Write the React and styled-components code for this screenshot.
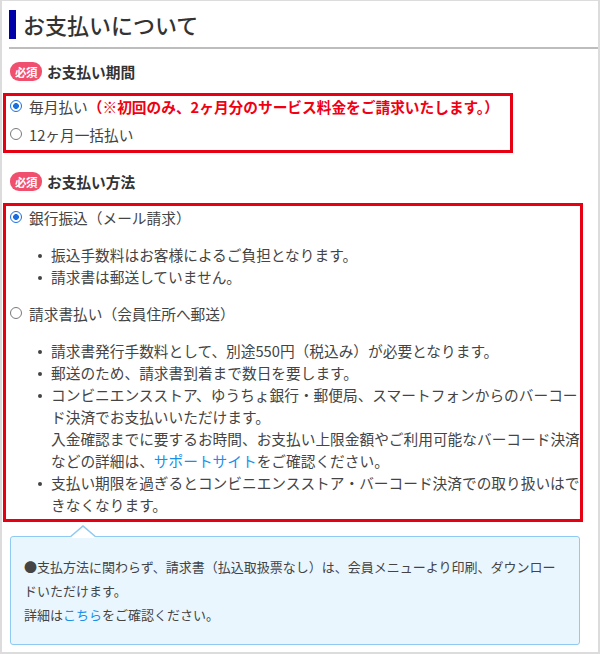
import React from "react";
import styled, { createGlobalStyle } from "styled-components";

const Global = createGlobalStyle`
  html, body { margin: 0; padding: 0; background: #fff; }
  body { font-family: "Noto Sans CJK JP", "Noto Sans", sans-serif; color: #444; }
  * { box-sizing: border-box; }
`;

const Frame = styled.div`
  width: 600px;
  height: 654px;
  border-style: solid;
  border-color: #dcdcdc;
  border-width: 1px 2px 2px 2px;
  display: flex;
  flex-direction: column;
  align-items: flex-start;
  overflow: hidden;
`;

const Heading = styled.h1`
  margin: 9px 0 0 7px;
  align-self: stretch;
  padding: 0 0 8px 0;
  border-bottom: 2px solid #bdbdbd;
  display: flex;
  align-items: center;
  gap: 7px;
  font-size: 22px;
  font-weight: 500;
  line-height: 29px;
  color: #333;
`;

const Bar = styled.span`
  width: 7px;
  height: 29px;
  background: #0000a8;
`;

const SectionLabel = styled.div`
  margin: ${(p) => p.$mt}px 0 0 8px;
  display: flex;
  align-items: center;
  gap: 5px;
  height: 19px;
  font-size: 14.7px;
  font-weight: 700;
  color: #333;
`;

const Badge = styled.span`
  width: 32px;
  height: 19px;
  border-radius: 9px;
  background: #f0506e;
  color: #fff;
  font-size: 11.5px;
  font-weight: 700;
  display: flex;
  align-items: center;
  justify-content: center;
  letter-spacing: -0.5px;
`;

const RedBox = styled.div`
  margin: 12px 0 0 1px;
  width: ${(p) => p.$w}px;
  border: 3px solid #e60012;
  padding: ${(p) => p.$pad};
  display: flex;
  flex-direction: column;
  gap: ${(p) => p.$gap}px;
`;

const Radio = styled.label`
  display: flex;
  align-items: center;
  gap: 7px;
  height: ${(p) => p.$h}px;
  font-size: 14.7px;
  color: #444;
  white-space: nowrap;
`;

const RadioMark = styled.span`
  width: 12px;
  height: 12px;
  border-radius: 50%;
  flex: none;
  border: 1.5px solid ${(p) => (p.$on ? "#1a6fe0" : "#7a7a7a")};
  background: ${(p) =>
    p.$on ? "radial-gradient(circle, #1a6fe0 0 2.6px, #fff 3.2px)" : "#fff"};
`;

const Note = styled.span`
  color: #f00012;
  font-weight: 700;
`;

const Group = styled.div`
  display: flex;
  flex-direction: column;
`;

const List = styled.ul`
  list-style: none;
  margin: 16px 0 0 0;
  padding: 0 0 0 28px;
  width: 572px;
  font-size: 14.7px;
  line-height: 22px;
  color: #444;
`;

const Item = styled.li`
  display: grid;
  grid-template-columns: 13px 1fr;
  &::before {
    content: "";
    width: 4px;
    height: 4px;
    border-radius: 50%;
    background: #444;
    margin-top: 10px;
  }
`;

const Link = styled.a`
  color: #1a8fe8;
  text-decoration: none;
`;

const InfoBox = styled.div`
  position: relative;
  margin: 14px 0 0 8px;
  width: 570px;
  border: 1px solid #8fcaf2;
  border-radius: 3px;
  background: #eaf6fe;
  padding: 18px 18px 17px 13px;
  font-size: 13px;
  line-height: 24px;
  color: #444;
  &::before,
  &::after {
    content: "";
    position: absolute;
    left: 58px;
    width: 0;
    height: 0;
    border-left: 14px solid transparent;
    border-right: 14px solid transparent;
  }
  &::before {
    top: -12px;
    border-bottom: 12px solid #8fcaf2;
  }
  &::after {
    top: -10.5px;
    left: 59px;
    border-left-width: 13px;
    border-right-width: 13px;
    border-bottom: 11px solid #fff;
  }
`;

const Para = styled.p`
  margin: 0;
`;

export default function App() {
  return (
    <>
      <Global />
      <Frame>
        <Heading>
          <Bar />
          お支払いについて
        </Heading>

        <SectionLabel $mt={13}>
          <Badge>必須</Badge>
          お支払い期間
        </SectionLabel>
        <RedBox $w={510} $pad="0 0 6px 4px" $gap={8}>
          <Radio $h={20}>
            <RadioMark $on />
            <span>
              毎月払い<Note>（※初回のみ、2ヶ月分のサービス料金をご請求いたします。）</Note>
            </span>
          </Radio>
          <Radio $h={20}>
            <RadioMark />
            12ヶ月一括払い
          </Radio>
        </RedBox>

        <SectionLabel $mt={19}>
          <Badge>必須</Badge>
          お支払い方法
        </SectionLabel>
        <RedBox $w={580} $pad="0 0 3px 4px" $gap={14}>
          <Group>
            <Radio $h={22}>
              <RadioMark $on />
              銀行振込（メール請求）
            </Radio>
            <List>
              <Item><span>振込手数料はお客様によるご負担となります。</span></Item>
              <Item><span>請求書は郵送していません。</span></Item>
            </List>
          </Group>
          <Group>
            <Radio $h={22}>
              <RadioMark />
              請求書払い（会員住所へ郵送）
            </Radio>
            <List>
              <Item><span>請求書発行手数料として、別途550円（税込み）が必要となります。</span></Item>
              <Item><span>郵送のため、請求書到着まで数日を要します。</span></Item>
              <Item>
                <span>
                  コンビニエンスストア、ゆうちょ銀行・郵便局、スマートフォンからのバーコード決済でお支払いいただけます。
                  <br />
                  入金確認までに要するお時間、お支払い上限金額やご利用可能なバーコード決済などの詳細は、
                  <Link href="#">サポートサイト</Link>をご確認ください。
                </span>
              </Item>
              <Item><span>支払い期限を過ぎるとコンビニエンスストア・バーコード決済での取り扱いはできなくなります。</span></Item>
            </List>
          </Group>
        </RedBox>

        <InfoBox>
          <Para>●支払方法に関わらず、請求書（払込取扱票なし）は、会員メニューより印刷、ダウンロードいただけます。</Para>
          <Para>
            詳細は<Link href="#">こちら</Link>をご確認ください。
          </Para>
        </InfoBox>
      </Frame>
    </>
  );
}
